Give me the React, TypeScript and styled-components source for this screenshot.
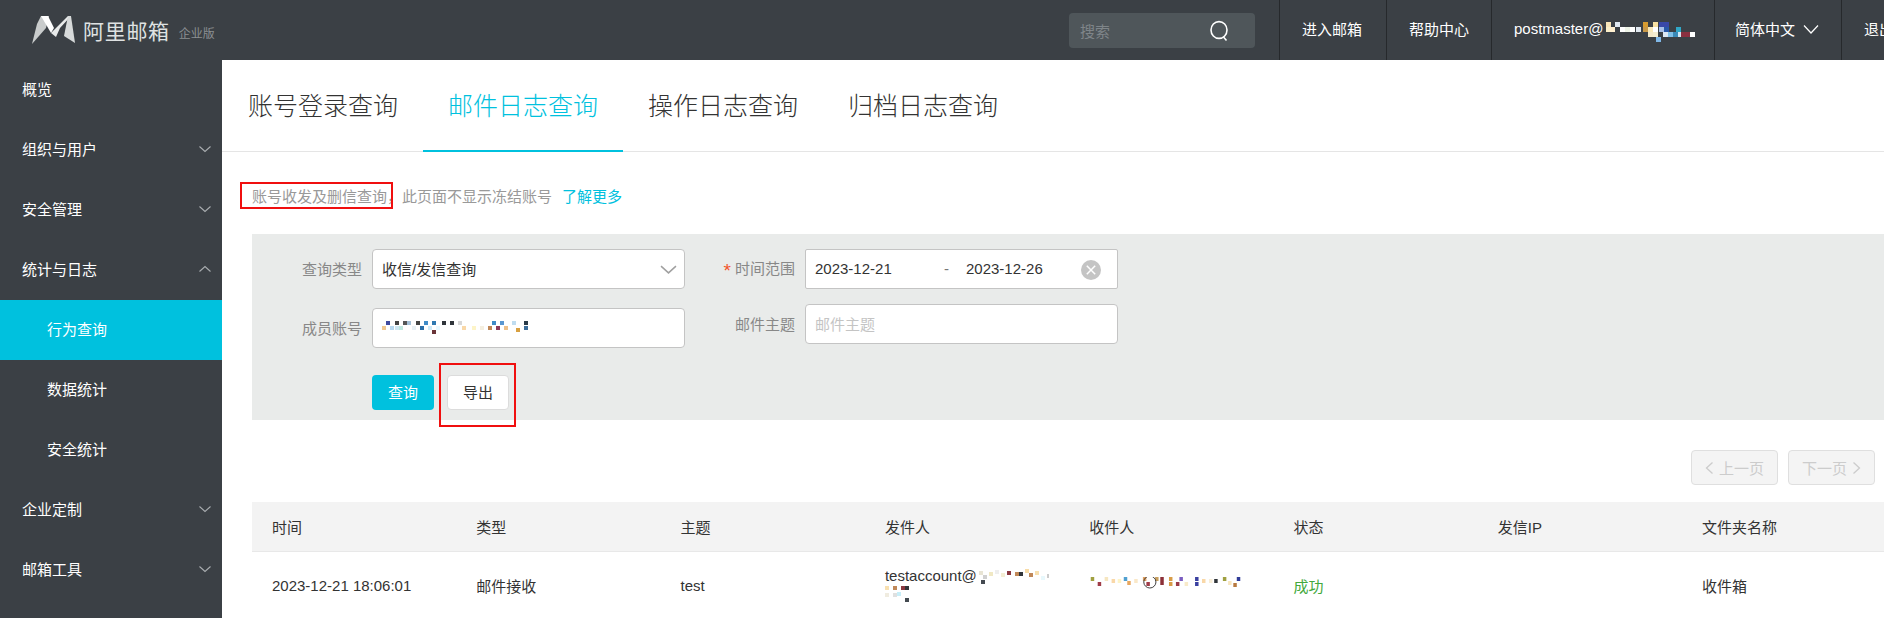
import React from "react";
import styled, { createGlobalStyle } from "styled-components";

const Global = createGlobalStyle`
  html, body { margin: 0; padding: 0; background: #fff; }
  body { font-family: "Liberation Sans", "Noto Sans CJK SC", sans-serif; font-size: 15px; color: #333; overflow: hidden; }
  * { box-sizing: border-box; }
`;

const Page = styled.div`width: 1884px; height: 618px; overflow: hidden; display: flex; flex-direction: column;`;
const Header = styled.header`height: 60px; flex: none; background: #3b4045; display: flex; align-items: stretch; color: #fff; overflow: hidden;`;
const Brand = styled.div`width: 1069px; flex: none; display: flex; align-items: center; padding-left: 32px;`;
const BrandName = styled.span`margin-left: 7px; font-size: 21px; letter-spacing: 0.7px; font-weight: 400; color: #dfe2e2; line-height: 1; font-family: "Noto Sans CJK SC", sans-serif;`;
const BrandEdition = styled.span`margin-left: 9px; margin-top: 4px; font-size: 12px; color: #8b8f92;`;
const Search = styled.div`width: 186px; height: 35px; flex: none; margin-top: 13px; border-radius: 4px; background: #4f565a; display: flex; align-items: center; justify-content: space-between; padding: 0 25px 0 11px; color: #7f8589; font-size: 15px;`;
const Nav = styled.nav`margin-left: 24px; display: flex; flex: none;`;
const NavItem = styled.div<{ $w: number; $pl?: number }>`width: ${p => p.$w}px; flex: none; border-left: 1px solid #26292c; display: flex; align-items: center; padding: 0 0 3px ${p => p.$pl ?? 22}px; font-size: 15px; white-space: nowrap; color: #fff;`;

const Body = styled.div`flex: 1; display: flex; min-height: 0;`;
const Sidebar = styled.aside`width: 222px; flex: none; background: #3b4045;`;
const MenuItem = styled.div<{ $sub?: boolean; $active?: boolean }>`height: 60px; display: flex; align-items: center; justify-content: space-between; padding: 0 10px 3px ${p => (p.$sub ? 47 : 22)}px; font-size: 15px; color: #fff; background: ${p => (p.$active ? "#00c1de" : "transparent")};`;
const Main = styled.main`flex: 1; min-width: 0; overflow: hidden; background: #fff;`;
const Tabs = styled.div`height: 92px; border-bottom: 1px solid #e5e5e5; display: flex; padding-left: 1px;`;
const Tab = styled.div<{ $active?: boolean }>`width: 200px; height: 92px; flex: none; display: flex; align-items: center; justify-content: center; font-size: 25px; font-weight: 300; padding-bottom: 2px; color: ${p => (p.$active ? "#00c1de" : "#333")}; border-bottom: ${p => (p.$active ? "2px solid #00c1de" : "2px solid transparent")};`;
const Notice = styled.div`height: 44px; margin-top: 23px; padding: 0 0 3px 30px; display: flex; align-items: center; color: #999; font-size: 15px;`;
const Marked = styled.span`position: relative; &::before { content: ""; position: absolute; left: -12px; top: -3px; right: 9px; bottom: -3px; border: 2px solid #f00f0f; }`;
const NoticeLink = styled.span`color: #00c1de; margin-left: 10px;`;
const FormPanel = styled.section`margin-left: 30px; margin-top: 15px; height: 186px; background: #e9ebea; padding-top: 15px; display: flex; flex-direction: column;`;
const FormColumns = styled.div`display: flex; height: 99px;`;
const FormColumn = styled.div<{ $gap: number }>`display: flex; flex-direction: column; gap: ${p => p.$gap}px;`;
const FormRow = styled.div`display: flex; align-items: center; gap: 10px;`;
const Label = styled.label`width: 110px; text-align: right; color: #888; font-size: 15px; flex: none; padding-bottom: 2px;`;
const Star = styled.span`color: #f2552c; margin-right: 4px; font-size: 19px; line-height: 1; vertical-align: -3px;`;
const Field = styled.div<{ $muted?: boolean; $square?: boolean }>`width: 313px; height: 40px; background: #fff; border: 1px solid #c4c4c4; border-radius: ${p => (p.$square ? 2 : 4)}px; display: flex; align-items: center; padding: 0 9px 2px; font-size: 15px; color: ${p => (p.$muted ? "#c4c4c4" : "#333")};`;
const FieldEnd = styled.span<{ $mr: number; $mt: number }>`margin: ${p => p.$mt}px ${p => p.$mr}px 0 auto; display: flex;`;
const DateText = styled.span`width: 129px;`;
const DateDash = styled.span`width: 22px; color: #777;`;
const Actions = styled.div`margin: 27px 0 0 120px; display: flex; gap: 13px;`;
const PrimaryBtn = styled.button`width: 62px; height: 35px; border: 0; border-radius: 4px; background: #00c1de; color: #fff; font: inherit; font-size: 15px; padding: 0 0 2px;`;
const Outlined = styled.button`position: relative; width: 62px; height: 35px; border: 1px solid #dcdcdc; border-radius: 4px; background: #fff; color: #333; font: inherit; font-size: 15px; padding: 0 0 2px; &::before { content: ""; position: absolute; left: -9px; right: -8px; top: -13px; bottom: -18px; border: 2px solid #f00f0f; }`;
const Pager = styled.div`display: flex; justify-content: flex-end; gap: 10px; padding-right: 9px; margin-top: 30px;`;
const PageBtn = styled.div`width: 87px; height: 35px; border: 1px solid #dfdfdf; border-radius: 4px; background: #f4f4f4; color: #ccc; font-size: 15px; display: flex; align-items: center; justify-content: center; gap: 5px;`;
const Table = styled.div`margin: 17px 0 0 30px;`;
const Row = styled.div<{ $head?: boolean }>`display: grid; grid-template-columns: repeat(8, 204.3px); height: ${p => (p.$head ? 50 : 66)}px; align-items: center; padding: 0 0 ${p => (p.$head ? 1 : 0)}px 20px; background: ${p => (p.$head ? "#f3f3f3" : "#fff")}; border-bottom: ${p => (p.$head ? "1px solid #e8e8e8" : "0")}; font-size: 15px; color: #333;`;
const Cell = styled.div<{ $ok?: boolean }>`color: ${p => (p.$ok ? "#43a93c" : "inherit")}; white-space: nowrap;`;
const SenderLine = styled.div`display: flex; align-items: center; line-height: 21px;`;

type C = [number, number, string];
const Mosaic = ({ w, h, vw, cells, s = 4, children }: { w: number; h: number; vw?: number; cells: C[]; s?: number; children?: React.ReactNode }) => (
  <svg width={w} height={h} viewBox={`0 0 ${vw ?? w} ${h}`} preserveAspectRatio="none" style={{ flex: "none" }} aria-hidden>
    {cells.map(([x, y, c], i) => <rect key={i} x={x} y={y} width={s} height={s} fill={c} />)}
    {children}
  </svg>
);

const Chevron = ({ up, size = 14, color = "#a9adb0" }: { up?: boolean; size?: number; color?: string }) => (
  <svg width={size} height={size} viewBox="0 0 14 14" fill="none" stroke={color} strokeWidth="1.1">
    <path d={up ? "M1.5 9.5 7 4.5l5.5 5" : "M1.5 4.5 7 9.5l5.5-5"} />
  </svg>
);

const Logo = () => (
  <svg width="44" height="28" viewBox="0 0 44 28">
    <polygon points="9,0 17,0 14,12 0,28 1,24 5,8" fill="#c9cccc" />
    <polygon points="9,0 16,0 22,12 19,17" fill="#ffffff" />
    <polygon points="19,17 36,0 39,0 28,12 24,21" fill="#e8eaea" />
    <polygon points="36,0 39,0 43,27 32,20" fill="#d7dada" />
  </svg>
);

const SearchIcon = () => (
  <svg width="21" height="22" viewBox="0 0 21 22" fill="none" stroke="#fff" strokeWidth="1.6">
    <ellipse cx="10" cy="10" rx="8" ry="8.4" />
    <path d="M14.5 17l3 3.5" />
  </svg>
);

const ClearIcon = () => (
  <svg width="20" height="20" viewBox="0 0 20 20">
    <circle cx="10" cy="10" r="10" fill="#c4c4c4" />
    <path d="M5.8 5.8l8.4 8.4M14.2 5.8l-8.4 8.4" stroke="#fff" strokeWidth="1.5" />
  </svg>
);

const menu = [
  { t: "概览" }, { t: "组织与用户", c: 1 }, { t: "安全管理", c: 1 }, { t: "统计与日志", c: 2 },
  { t: "行为查询", sub: 1, active: 1 }, { t: "数据统计", sub: 1 }, { t: "安全统计", sub: 1 },
  { t: "企业定制", c: 1 }, { t: "邮箱工具", c: 1 },
];
const heads = ["时间", "类型", "主题", "发件人", "收件人", "状态", "发信IP", "文件夹名称"];

const mailCells: C[] = [[3,7,"#f8e4b8"],[3,12,"#fbeec8"],[7,12,"#fff0d0"],[12,7,"#dfe8f0"],[17,12,"#ffffff"],[22,12,"#eef4e8"],[27,12,"#ffffff"],[33,12,"#e0e8f0"],[40,7,"#d89c30"],[40,12,"#c89848"],[45,12,"#f8e8b8"],[50,7,"#f8e0a0"],[50,12,"#ffffff"],[50,17,"#f4ecd0"],[45,17,"#f4e8c8"],[56,7,"#3948a8"],[61,7,"#3948a8"],[56,12,"#a8c0e8"],[61,12,"#2858a8"],[53,22,"#80b8e8"],[60,17,"#dce8f4"],[65,17,"#80c0e8"],[70,17,"#3a8ab8"],[73,12,"#30a8c8"],[75,17,"#d0e8f4"],[78,17,"#8a3040"],[82,17,"#8a3040"],[87,17,"#ffffff"]];
const memberCells: C[] = [[0,7,"#f1c890"],[4,2,"#3f4aa0"],[8,7,"#b8d8f0"],[13,2,"#444"],[13,7,"#cfe8f4"],[17,7,"#bfe8e0"],[21,2,"#555"],[25,2,"#a3c0d8"],[30,7,"#e8f0f4"],[34,2,"#444"],[38,7,"#2a6ea8"],[42,2,"#3f8cc8"],[46,7,"#cfeaf8"],[50,2,"#2f78b0"],[50,11,"#6a3438"],[54,7,"#e8f8ff"],[60,2,"#30353a"],[68,2,"#30353a"],[76,2,"#d8d8d8"],[80,7,"#f9d8a8"],[90,7,"#fdf4c8"],[98,7,"#f5efe0"],[106,7,"#c08858"],[110,2,"#3f8cc8"],[114,7,"#8a3858"],[118,2,"#5a96d0"],[122,7,"#efc088"],[130,2,"#bfdcf0"],[134,9,"#d8a040"],[142,2,"#2a3a48"],[142,7,"#3a6c9a"]];
const recipientCells: C[] = [[2,0,"#a0a040"],[10,5,"#a03c48"],[18,0,"#f6e6c0"],[26,2,"#f9d8a8"],[33,2,"#fdf4c8"],[40,0,"#50a0d0"],[44,4,"#e8a860"],[52,2,"#fae8c8"],[62,0,"#e0a060"],[66,5,"#a03c48"],[76,0,"#c8a060"],[82,0,"#8c3038"],[82,4,"#8c3038"],[92,0,"#d89c48"],[92,5,"#d89c48"],[100,5,"#9a3a48"],[104,0,"#7a5cc0"],[110,5,"#f8eac8"],[122,0,"#3a40a0"],[122,5,"#3a40a0"],[130,2,"#f9d8a8"],[138,2,"#f8eed8"],[144,2,"#30353a"],[154,0,"#a0a040"],[160,4,"#f8e6c0"],[166,6,"#b87a40"],[170,0,"#303c98"]];
const senderTail: C[] = [[0,0,"#f8e0b0"],[8,0,"#c08858"],[16,0,"#8a3840"],[20,0,"#30353a"],[8,7,"#e0e0e0"],[12,6,"#c8eef8"],[20,12,"#444a50"],[0,7,"#f0ece0"]];
const senderHead: C[] = [[2,3,"#e8e4d4"],[6,7,"#d0d0d0"],[4,12,"#444a50"],[12,4,"#f0e8c4"],[18,2,"#eee"],[24,5,"#f4eed4"],[30,3,"#8a3840"],[38,4,"#c08858"],[42,4,"#30353a"],[48,1,"#f8dca8"],[52,5,"#c08858"],[58,3,"#f8e0b0"],[64,8,"#e8f8fc"],[70,6,"#ccc"]];

export default function App() {
  return (
    <Page>
      <Global />
      <Header>
        <Brand>
          <Logo />
          <BrandName>阿里邮箱</BrandName>
          <BrandEdition>企业版</BrandEdition>
        </Brand>
        <Search>搜索<SearchIcon /></Search>
        <Nav>
          <NavItem $w={107}>进入邮箱</NavItem>
          <NavItem $w={105}>帮助中心</NavItem>
          <NavItem $w={223}>postmaster@<Mosaic w={92} h={27} cells={mailCells} s={5} /></NavItem>
          <NavItem $w={127} $pl={20}>简体中文<svg width="16" height="14" viewBox="0 0 16 14" fill="none" stroke="#fff" strokeWidth="1.2" style={{ marginLeft: 8 }}><path d="M1 3.5l7 7.5 7-7.5" /></svg></NavItem>
          <NavItem $w={80}>退出</NavItem>
        </Nav>
      </Header>
      <Body>
        <Sidebar>
          {menu.map(m => (
            <MenuItem key={m.t} $sub={!!m.sub} $active={!!m.active}>
              {m.t}
              {m.c ? <Chevron up={m.c === 2} /> : null}
            </MenuItem>
          ))}
        </Sidebar>
        <Main>
          <Tabs>
            <Tab>账号登录查询</Tab>
            <Tab $active>邮件日志查询</Tab>
            <Tab>操作日志查询</Tab>
            <Tab>归档日志查询</Tab>
          </Tabs>
          <Notice>
            <Marked>账号收发及删信查询，</Marked>
            <span>此页面不显示冻结账号</span>
            <NoticeLink>了解更多</NoticeLink>
          </Notice>
          <FormPanel>
            <FormColumns>
              <FormColumn $gap={19}>
                <FormRow>
                  <Label>查询类型</Label>
                  <Field>收信/发信查询<FieldEnd $mr={-3} $mt={2}><Chevron size={19} color="#a0a0a0" /></FieldEnd></Field>
                </FormRow>
                <FormRow>
                  <Label>成员账号</Label>
                  <Field><Mosaic w={150} h={16} cells={memberCells} /></Field>
                </FormRow>
              </FormColumn>
              <FormColumn $gap={15}>
                <FormRow>
                  <Label><Star>*</Star>时间范围</Label>
                  <Field $square>
                    <DateText>2023-12-21</DateText>
                    <DateDash>-</DateDash>
                    <span>2023-12-26</span>
                    <FieldEnd $mr={7} $mt={4}><ClearIcon /></FieldEnd>
                  </Field>
                </FormRow>
                <FormRow>
                  <Label>邮件主题</Label>
                  <Field $muted>邮件主题</Field>
                </FormRow>
              </FormColumn>
            </FormColumns>
            <Actions>
              <PrimaryBtn>查询</PrimaryBtn>
              <Outlined>导出</Outlined>
            </Actions>
          </FormPanel>
          <Pager>
            <PageBtn><svg width="9" height="14" viewBox="0 0 9 14" fill="none" stroke="#ccc" strokeWidth="1.3"><path d="M7.5 1.5 1.5 7l6 5.5" /></svg>上一页</PageBtn>
            <PageBtn>下一页<svg width="9" height="14" viewBox="0 0 9 14" fill="none" stroke="#ccc" strokeWidth="1.3"><path d="M1.5 1.5 7.5 7l-6 5.5" /></svg></PageBtn>
          </Pager>
          <Table>
            <Row $head>{heads.map(h => <Cell key={h}>{h}</Cell>)}</Row>
            <Row>
              <Cell>2023-12-21 18:06:01</Cell>
              <Cell>邮件接收</Cell>
              <Cell>test</Cell>
              <Cell>
                <SenderLine>testaccount@<Mosaic w={72} h={16} cells={senderHead} /></SenderLine>
                <Mosaic w={26} h={16} cells={senderTail} />
              </Cell>
              <Cell>
                <Mosaic w={153} h={14} vw={176} cells={recipientCells}>
                  <ellipse cx="70" cy="5" rx="7" ry="6" fill="none" stroke="#333" strokeWidth="1" />
                </Mosaic>
              </Cell>
              <Cell $ok>成功</Cell>
              <Cell />
              <Cell>收件箱</Cell>
            </Row>
          </Table>
        </Main>
      </Body>
    </Page>
  );
}
